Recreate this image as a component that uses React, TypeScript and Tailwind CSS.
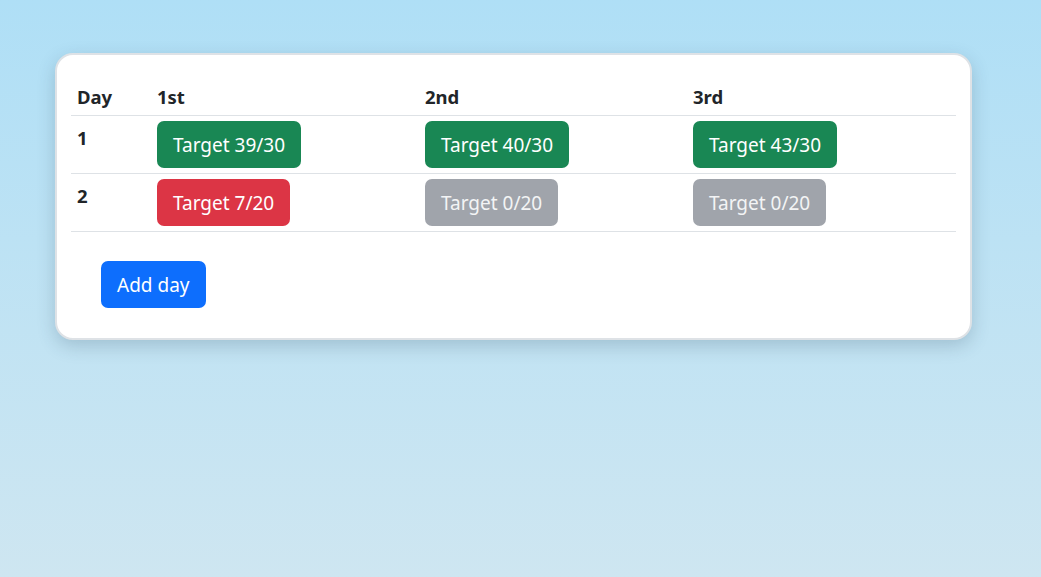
import React from 'react';

type Cell = { label: string; tone: 'ok' | 'bad' | 'idle' };

const rows: { day: number; cells: Cell[] }[] = [
  {
    day: 1,
    cells: [
      { label: 'Target 39/30', tone: 'ok' },
      { label: 'Target 40/30', tone: 'ok' },
      { label: 'Target 43/30', tone: 'ok' },
    ],
  },
  {
    day: 2,
    cells: [
      { label: 'Target 7/20', tone: 'bad' },
      { label: 'Target 0/20', tone: 'idle' },
      { label: 'Target 0/20', tone: 'idle' },
    ],
  },
];

const toneClass = {
  ok: 'bg-[#198754] text-white',
  bad: 'bg-[#dc3545] text-white',
  idle: 'bg-[#a0a4ab] text-[#f3f4f5]',
};

export default function App() {
  return (
    <div
      className="min-h-[577px] w-full bg-gradient-to-b from-[#afdff6] to-[#cee6f1] pt-[53px] pl-[55px] text-[#212529]"
      style={{ fontFamily: "'Noto Sans', 'Open Sans', sans-serif" }}
    >
      <div className="w-[917px] rounded-[18px] border-2 border-[#dee2e6] bg-white px-[14px] pt-[23px] pb-[30px] shadow-[0_6px_18px_rgba(40,70,90,0.22)]">
        <table className="w-full border-collapse text-[18.5px]">
          <thead>
            <tr className="border-b border-[#dee2e6]">
              <th className="w-[80px] px-[6px] py-[5px] text-left font-bold leading-[27px]">Day</th>
              <th className="w-[268px] px-[6px] py-[5px] text-left font-bold leading-[27px]">1st</th>
              <th className="w-[268px] px-[6px] py-[5px] text-left font-bold leading-[27px]">2nd</th>
              <th className="px-[6px] py-[5px] text-left font-bold leading-[27px]">3rd</th>
            </tr>
          </thead>
          <tbody>
            {rows.map((r) => (
              <tr key={r.day} className="border-b border-[#dee2e6]">
                <td className="px-[6px] py-[5px] align-top font-bold leading-[34px]">{r.day}</td>
                {r.cells.map((c, i) => (
                  <td key={i} className="px-[6px] py-[5px] align-top">
                    <button
                      className={`h-[47px] rounded-[7px] px-[16px] text-[19px] leading-[28px] ${toneClass[c.tone]}`}
                    >
                      {c.label}
                    </button>
                  </td>
                ))}
              </tr>
            ))}
          </tbody>
        </table>
        <div className="mt-[29px] pl-[30px]">
          <button className="h-[47px] rounded-[7px] bg-[#0d6efd] px-[16px] text-[19px] leading-[28px] text-white">
            Add day
          </button>
        </div>
      </div>
    </div>
  );
}
